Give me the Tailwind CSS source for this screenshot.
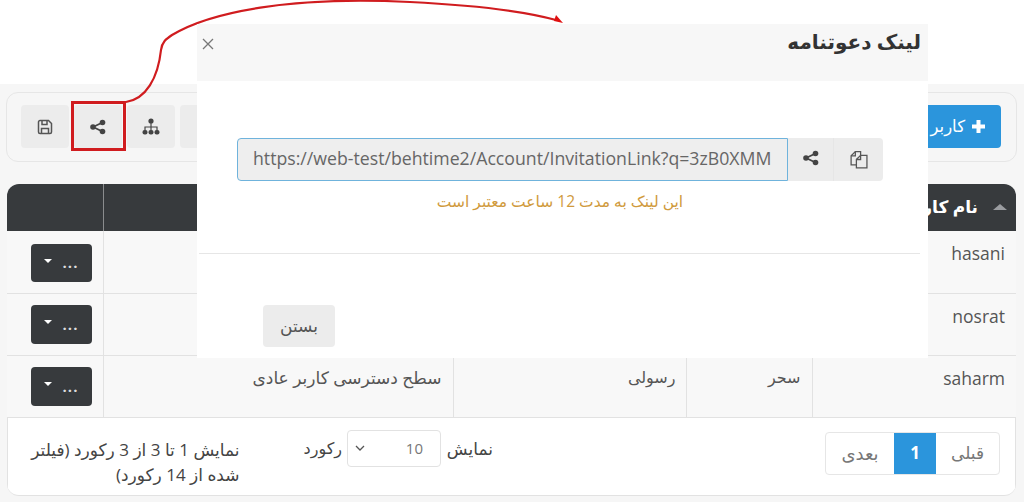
<!DOCTYPE html>
<html lang="fa">
<head>
  <meta charset="UTF-8">
  <title>لینک دعوتنامه</title>
  <script src="https://cdn.jsdelivr.net/npm/@tailwindcss/browser@4"></script>
</head>
<body class="relative w-[1024px] h-[502px] overflow-hidden bg-white font-['Open_Sans','DejaVu_Sans',sans-serif] text-[#555]">

  <!-- Page behind the modal -->
  <div class="mt-[84px] h-[418px] bg-[#f6f6f6] pt-2 pl-[6px] pr-[7px]">
    <div class="h-[70px] rounded-xl border border-[#e6e6e6] flex justify-between items-center pl-[14px] pr-[15px] pb-px">
      <div class="flex gap-[5px]">
        <button class="w-[48px] h-[43px] rounded bg-[#ececec] flex items-center justify-center">
          <svg class="w-4 h-4" viewBox="0 0 16 16" fill="none" stroke="#555" stroke-width="1.5"><path d="M1.500 3a1.500 1.500 0 0 1 1.500-1.500h8.500l3 3V13a1.500 1.500 0 0 1-1.500 1.500H3A1.500 1.500 0 0 1 1.500 13z"/><path d="M5 2v3.500h5V2M4.500 14v-4.500h7V14"/></svg>
        </button>
        <button class="w-[48px] h-[43px] rounded bg-[#ececec] flex items-center justify-center">
          <svg class="w-4 h-4" viewBox="0 0 16 16" fill="#444"><circle cx="12.500" cy="3.500" r="2.800"/><circle cx="12.500" cy="12.500" r="2.800"/><circle cx="3" cy="8" r="2.800"/><path d="M3 8l9.500-4.500M3 8l9.500 4.500" stroke="#444" stroke-width="1.800"/></svg>
        </button>
        <button class="w-[48px] h-[43px] rounded bg-[#ececec] flex items-center justify-center">
          <svg class="w-[18px] h-[18px]" viewBox="0 0 18 18" fill="#444"><circle cx="9" cy="3" r="2.600"/><rect x="0.500" y="12" width="5" height="4.500" rx="2"/><rect x="6.500" y="12" width="5" height="4.500" rx="2"/><rect x="12.500" y="12" width="5" height="4.500" rx="2"/><path d="M9 5v7M3 12V9h12v3" fill="none" stroke="#444" stroke-width="1.200"/></svg>
        </button>
        <button class="w-[48px] h-[43px] rounded bg-[#ececec]"></button>
      </div>
      <button dir="rtl" class="w-[90px] h-[43px] rounded bg-[#2b95dc] text-white text-[16.500px] flex items-center gap-[6px] pr-[15px]">
        <svg class="w-[15px] h-[15px] shrink-0" viewBox="0 0 15 15" fill="#fff"><path d="M5.500 1h4v4.500H14v4H9.500V14h-4V9.500H1v-4h4.500z"/></svg>
        <span>کاربر</span>
      </button>
    </div>

    <div class="mt-[22px] ml-px mr-px h-[312px] rounded-xl border-b border-[#e2e2e2] bg-white overflow-hidden">
      <table dir="rtl" class="w-full table-fixed border-collapse text-[17.500px]">
        <thead>
          <tr class="h-[47px] bg-[#373a3d] text-white">
            <th class="w-[204px] text-right pr-[9px] font-bold text-[17px]">
              <span class="inline-flex items-center gap-[15px] pb-1"><span class="w-0 h-0 border-x-[7px] border-x-transparent border-b-[6px] border-b-[#9a9ca0]"></span><span>نام کاربری</span></span>
            </th>
            <th class="w-[126px] border-r border-[#8a8c8e]"></th>
            <th class="w-[233px] border-r border-[#8a8c8e]"></th>
            <th class="border-r border-[#8a8c8e]"></th>
            <th class="w-[96px] border-r border-[#8a8c8e]"></th>
          </tr>
        </thead>
        <tbody class="bg-[#f8f8f8]">
          <tr class="h-[62px] border-b border-[#e2e2e2]">
            <td class="align-top pt-[9px] pr-[11px] text-right" dir="ltr">hasani</td>
            <td class="border-r border-[#e2e2e2]"></td><td class="border-r border-[#e2e2e2]"></td><td class="border-r border-[#e2e2e2]"></td>
            <td class="border-r border-[#e2e2e2] pr-[11px]"><button class="w-[61px] h-[38px] mt-[2px] rounded bg-[#373a3d] text-white flex items-center justify-center gap-[11px]"><span class="text-[15px] font-bold leading-none tracking-[1px] text-[#ddd]">...</span><span class="w-0 h-0 border-x-[4px] border-x-transparent border-t-[4px] border-t-white -mt-1"></span></button></td>
          </tr>
          <tr class="h-[62px] border-b border-[#e2e2e2]">
            <td class="align-top pt-[9px] pr-[11px] text-right" dir="ltr">nosrat</td>
            <td class="border-r border-[#e2e2e2]"></td><td class="border-r border-[#e2e2e2]"></td><td class="border-r border-[#e2e2e2]"></td>
            <td class="border-r border-[#e2e2e2] pr-[11px]"><button class="w-[61px] h-[39px] rounded bg-[#373a3d] text-white flex items-center justify-center gap-[11px]"><span class="text-[15px] font-bold leading-none tracking-[1px] text-[#ddd]">...</span><span class="w-0 h-0 border-x-[4px] border-x-transparent border-t-[4px] border-t-white -mt-1"></span></button></td>
          </tr>
          <tr class="h-[62px] border-b border-[#e2e2e2]">
            <td class="align-top pt-[9px] pr-[11px] text-right" dir="ltr">saharm</td>
            <td class="align-top pt-[9px] pr-[11px] border-r border-[#e2e2e2] text-[16px]">سحر</td>
            <td class="align-top pt-[9px] pr-[10px] border-r border-[#e2e2e2] text-[16px]">رسولی</td>
            <td class="align-top pt-[9px] pr-[11px] border-r border-[#e2e2e2] text-[17px]">سطح دسترسی کاربر عادی</td>
            <td class="border-r border-[#e2e2e2] pr-[11px]"><button class="w-[61px] h-[39px] rounded bg-[#373a3d] text-white flex items-center justify-center gap-[11px]"><span class="text-[15px] font-bold leading-none tracking-[1px] text-[#ddd]">...</span><span class="w-0 h-0 border-x-[4px] border-x-transparent border-t-[4px] border-t-white -mt-1"></span></button></td>
          </tr>
        </tbody>
      </table>

      <div dir="rtl" class="flex items-start h-[78px] border-x border-[#e2e2e2] pr-[15px] text-[17px] text-[#444]">
        <div class="flex h-[43px] mt-[14px] rounded border border-[#e6e6e6] text-[#777] bg-white">
          <span class="w-[63px] flex items-center justify-center">قبلی</span>
          <span class="w-[42px] bg-[#2b95dc] text-white font-bold flex items-center justify-center">1</span>
          <span class="w-[68px] flex items-center justify-center text-[18px]">بعدی</span>
        </div>
        <div class="flex items-start gap-[5px] mt-3 mr-[332px]">
          <span class="w-[47px] pt-[6px]">نمایش</span>
          <div class="w-[94px] h-[37px] rounded border border-[#e2e2e2] flex items-center justify-between pr-[17px] pl-[7px] text-[#777]">
            <span class="text-[15px]">10</span>
            <svg class="w-[10px] h-[10px]" viewBox="0 0 10 10" fill="none" stroke="#555" stroke-width="1.300"><path d="M1 3l4 4 4-4"/></svg>
          </div>
          <span class="pt-[6px] text-[16px]">رکورد</span>
        </div>
        <p class="w-[212px] mr-[64px] mt-[19px] leading-[25px]">نمایش 1 تا 3 از 3 رکورد (فیلتر شده از 14 رکورد)</p>
      </div>
    </div>
  </div>

  <!-- Red highlight on the share button -->
  <div class="absolute left-[71px] top-[101px] w-[55px] h-[50px] border-[3px] border-[#d01c1f]"></div>

  <!-- Callout arrow -->
  <svg class="absolute left-0 top-0 w-[1024px] h-[120px]" viewBox="0 0 1024 120" fill="none">
    <path d="M126 102C146 99 158 78 161 50C162 42 166 39 172 35C210 12 290 -4 410 2C470 5 520 10 556 20" stroke="#d01c1f" stroke-width="2.200"/>
    <path d="M563 23l-9-2 2-6z" fill="#e01010"/>
  </svg>

  <!-- Modal -->
  <div dir="rtl" class="absolute left-[197px] top-6 w-[731px] h-[334px] bg-white">
    <div class="h-[57px] bg-[#f7f7f7] flex justify-between items-start px-[7px] pt-[3px]">
      <h2 class="text-[20px] font-bold text-[#333]">لینک دعوتنامه</h2>
      <svg class="w-[14px] h-[14px] mt-[10px] -ml-[3px]" viewBox="0 0 14 14" fill="none" stroke="#777" stroke-width="1.300"><path d="M2 2l10 10M12 2L2 12"/></svg>
    </div>
    <div class="pt-[57px] pr-[45px] pl-10">
      <div class="flex h-[43px]">
        <button class="w-[50px] bg-[#ececec] rounded-r flex items-center justify-center border-l border-[#e6e6e6]">
          <svg class="w-[19px] h-[19px]" viewBox="0 0 18 18" fill="none" stroke="#555" stroke-width="1.200"><path d="M11 5V1.500H6L2 5.500V14h5"/><path d="M6 1.500v4H2"/><path d="M7 9l4-4h6v12H7z"/><path d="M11 5v4H7"/></svg>
        </button>
        <button class="w-[45px] bg-[#ececec] flex items-center justify-center">
          <svg class="w-4 h-4 -mt-1" viewBox="0 0 16 16" fill="#444"><circle cx="12.500" cy="3.500" r="2.800"/><circle cx="12.500" cy="12.500" r="2.800"/><circle cx="3" cy="8" r="2.800"/><path d="M3 8l9.500-4.500M3 8l9.500 4.500" stroke="#444" stroke-width="1.800"/></svg>
        </button>
        <input dir="ltr" readonly value="https://web-test/behtime2/Account/InvitationLink?q=3zB0XMM" class="flex-1 min-w-0 pl-[15px] pb-[2px] bg-[#eeeeee] border border-[#6fb3dc] rounded-l text-[17.700px] text-[#666]">
      </div>
      <p class="text-center text-[15.500px] text-[#d09a3c] mt-[9px]">این لینک به مدت 12 ساعت معتبر است</p>
    </div>
    <div class="mt-[40px] mr-[8px] ml-[2px] border-t border-[#e6e6e6]"></div>
    <div class="pt-[51px] pr-[593px]">
      <button class="w-[72px] h-[42px] pb-[2px] rounded bg-[#ececec] text-[17px] text-[#555]">بستن</button>
    </div>
  </div>
</body>
</html>
